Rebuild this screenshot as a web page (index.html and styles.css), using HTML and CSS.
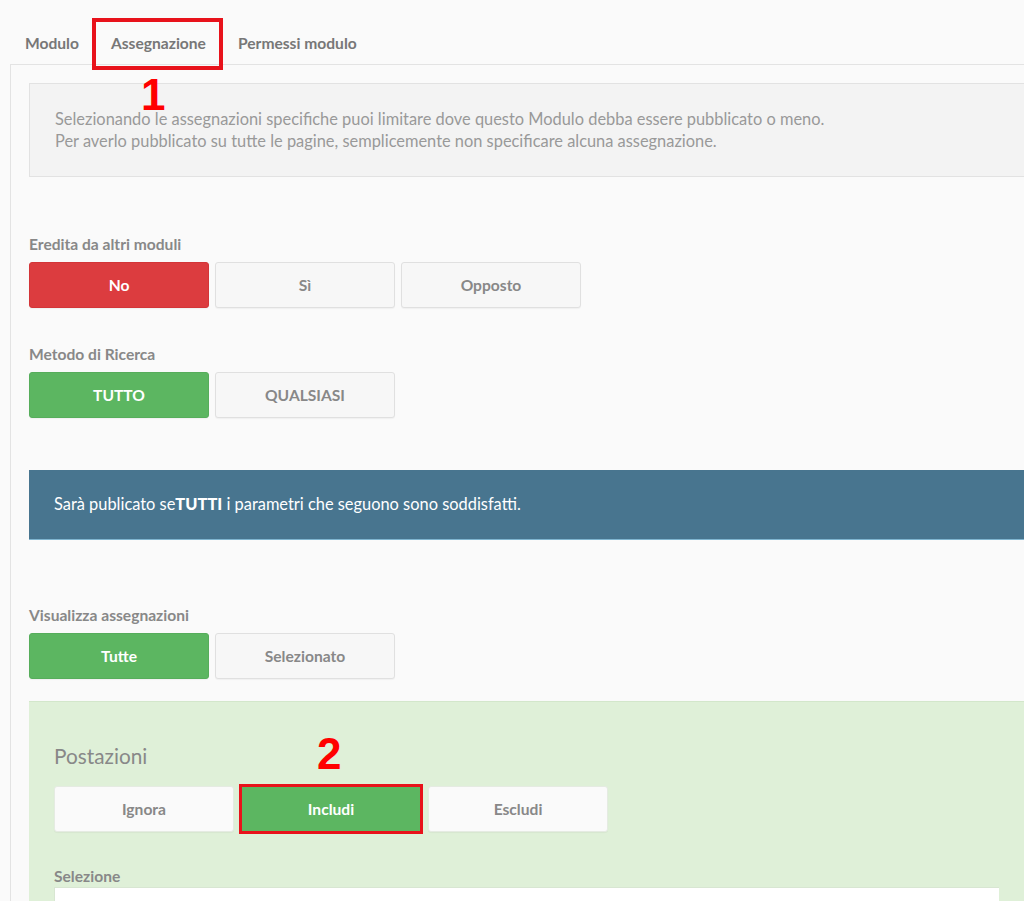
FILE: index.html
```html
<!DOCTYPE html>
<html lang="it">

<head>
    <meta charset="UTF-8">
    <meta name="viewport" content="width=device-width, initial-scale=1.0">
    <title>Assegnazione modulo</title>
    <link rel="stylesheet" href="styles.css">
</head>

<body>
    <div class="tabs">
        <a class="tab">Modulo</a>
        <a class="tab active">Assegnazione</a>
        <a class="tab">Permessi modulo</a>
        <span class="mark mark-box-tab"></span>
        <span class="mark mark-num mark-one">1</span>
    </div>
    <div class="tab-panel">
        <div class="info-box">
            <p>Selezionando le assegnazioni specifiche puoi limitare dove questo Modulo debba essere pubblicato o meno.</p>
            <p>Per averlo pubblicato su tutte le pagine, semplicemente non specificare alcuna assegnazione.</p>
        </div>

        <div class="field first">
            <label>Eredita da altri moduli</label>
            <div class="btn-group">
                <button class="btn btn-red">No</button>
                <button class="btn">Sì</button>
                <button class="btn">Opposto</button>
            </div>
        </div>

        <div class="field">
            <label>Metodo di Ricerca</label>
            <div class="btn-group">
                <button class="btn btn-green">TUTTO</button>
                <button class="btn">QUALSIASI</button>
            </div>
        </div>

        <div class="banner">
            Sarà publicato se<strong>TUTTI</strong> i parametri che seguono sono soddisfatti.
        </div>

        <div class="field after-banner">
            <label>Visualizza assegnazioni</label>
            <div class="btn-group">
                <button class="btn btn-green">Tutte</button>
                <button class="btn">Selezionato</button>
            </div>
        </div>

        <div class="assign-panel">
            <h3>Postazioni</h3>
            <div class="btn-group">
                <button class="btn btn-white">Ignora</button>
                <button class="btn btn-green marked">Includi</button>
                <button class="btn btn-white">Escludi</button>
            </div>
            <span class="mark mark-num mark-two">2</span>
            <label class="sel-label">Selezione</label>
            <div class="sel-input"></div>
        </div>
    </div>
</body>

</html>
```

FILE: styles.css
```css
* {
    box-sizing: border-box;
    margin: 0;
    padding: 0;
}

body {
    font-family: Lato, "Open Sans", sans-serif;
    background-color: #fafafa;
    color: #777;
    overflow: hidden;
}

.tabs {
    position: relative;
    display: flex;
    padding-left: 9px;
    height: 64px;
    align-items: center;
    padding-top: 22px;
}

.tab {
    font-size: 15.6px;
    font-weight: bold;
    color: #777;
    padding: 0 16px;
    line-height: 20px;
}

.tab-panel {
    margin-left: 10px;
    border-top: 1px solid #e3e3e3;
    border-left: 1px solid #e3e3e3;
    padding: 18px 0 0 18px;
    height: 900px;
}

.info-box {
    background: #f3f3f3;
    border: 1px solid #e2e2e2;
    border-right: none;
    padding: 24px 25px;
    font-size: 16.4px;
    line-height: 22px;
    color: #999;
    margin-right: -2px;
}

.field label,
.sel-label {
    display: block;
    font-size: 15.6px;
    font-weight: bold;
    color: #888;
    line-height: 20px;
    margin-bottom: 8px;
}

.field {
    margin-top: 36px;
}

.field.first {
    margin-top: 57px;
}

.field.after-banner {
    margin-top: 65px;
}

.btn-group {
    display: flex;
    gap: 6px;
}

.btn {
    width: 180px;
    height: 46px;
    font-family: Lato, "Open Sans", sans-serif;
    font-size: 15.6px;
    font-weight: bold;
    color: #888;
    background: #f7f7f7;
    border: 1px solid #e0e0e0;
    border-radius: 3px;
    box-shadow: 0 1px 1px rgba(0, 0, 0, 0.04);
}

.btn-red {
    background: #dc3c3f;
    border-color: #d33538;
    color: white;
}

.btn-green {
    background: #5cb661;
    border-color: #56ad5b;
    color: white;
}

.btn-white {
    background: #fafafa;
    border-color: #e5ebe2;
}

.banner {
    margin-top: 52px;
    background: #48758f;
    border-bottom: 1px solid #7fb5d0;
    color: white;
    font-size: 16.4px;
    height: 70px;
    padding: 23px 25px;
    line-height: 22px;
}

.banner strong {
    font-weight: 900;
}

.assign-panel {
    position: relative;
    margin-top: 22px;
    background: #dff0d8;
    border-top: 1px solid #d3e7cb;
    padding: 40px 25px 0;
    height: 300px;
}

.assign-panel h3 {
    font-size: 20.8px;
    font-weight: normal;
    color: #888;
    line-height: 28px;
    margin-bottom: 16px;
}

.assign-panel .btn-group {
    gap: 7px;
}

.sel-label {
    margin-top: 34px;
    margin-bottom: 1px;
}

.sel-input {
    height: 40px;
    background: white;
    border: 1px solid #d8e6d2;
    border-right: none;
}

.marked {
    border-radius: 0;
    outline: 3px solid #e8121b;
    outline-offset: -1px;
}

/* red annotations on top of the page */
.mark {
    position: absolute;
    color: #f00;
}

.mark-box-tab {
    left: 92px;
    top: 18px;
    width: 131px;
    height: 52px;
    border: 4px solid #e8121b;
}

.mark-num {
    font-family: "Liberation Sans", Arial, sans-serif;
    font-weight: bold;
    font-size: 44px;
    line-height: 1;
}

.mark-one {
    left: 141px;
    top: 73px;
}

.mark-two {
    left: 288px;
    top: 30px;
}
```
